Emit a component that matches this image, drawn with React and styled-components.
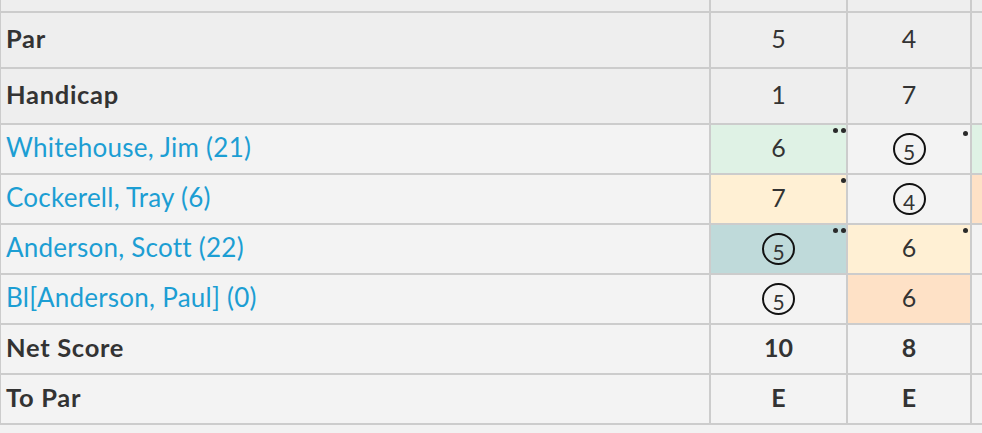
import React from "react";
import styled, { createGlobalStyle } from "styled-components";

const Global = createGlobalStyle`
  html, body { margin: 0; padding: 0; background: #f2f2f2; }
  body { font-family: Lato, "Open Sans", Arial, sans-serif; overflow: hidden; }
`;

const Table = styled.div`
  display: grid;
  grid-template-columns: 708px 135px 122px 122px;
  grid-template-rows: 11px 54px 54px repeat(6, 48px);
  column-gap: 2px;
  row-gap: 2px;
  padding: 0 0 2px 1px;
  background: #cccccc;
  width: 1200px;
  overflow: hidden;
`;

const tones = {
  head: "#eeeeee",
  plain: "#f3f3f3",
  green: "#dff2e5",
  yellow: "#fff0d4",
  peach: "#fee1c6",
  teal: "#bfdada",
};

const LabelCell = styled.div`
  display: flex;
  align-items: center;
  padding: 0 0 4px 5px;
  background: ${(p) => tones[p.$tone || "plain"]};
  color: ${(p) => (p.$link ? "#1c9ed3" : "#333333")};
  font-weight: ${(p) => (p.$bold ? 700 : 400)};
  font-size: ${(p) => (p.$bold ? "25.5px" : "26px")};
  letter-spacing: ${(p) => (p.$bold ? "0.7px" : "0.25px")};
  white-space: nowrap;
`;

const ScoreCell = styled.div`
  position: relative;
  display: flex;
  align-items: center;
  justify-content: center;
  padding-bottom: 4px;
  background: ${(p) => tones[p.$tone || "plain"]};
  color: #333333;
  font-weight: ${(p) => (p.$bold ? 700 : 400)};
  font-size: 25px;
`;

const Circle = styled.span`
  box-sizing: border-box;
  width: 33px;
  height: 32px;
  margin-top: 4px;
  border: 2px solid #111;
  border-radius: 50%;
  display: flex;
  justify-content: center;
  align-items: flex-start;
  padding-top: 7px;
  font-size: 21px;
  line-height: 20px;
  color: #333;
`;

const Dots = styled.span`
  position: absolute;
  top: ${(p) => (p.$low ? 6 : 3)}px;
  right: ${(p) => (p.$inset ? 2 : 0)}px;
  display: flex;
  gap: 3px;
`;

const Dot = styled.span`
  width: 5px;
  height: 5px;
  border-radius: 50%;
  background: #2a2a2a;
`;

const rows = [
  { label: "Par", tone: "head", bold: true, cells: [{ v: "5" }, { v: "4" }, {}] },
  { label: "Handicap", tone: "head", bold: true, cells: [{ v: "1" }, { v: "7" }, {}] },
  {
    label: "Whitehouse, Jim (21)",
    link: true,
    cells: [
      { v: "6", tone: "green", dots: 2 },
      { v: "5", circle: true, dots: 1, low: true, inset: true },
      { tone: "green" },
    ],
  },
  {
    label: "Cockerell, Tray (6)",
    link: true,
    cells: [
      { v: "7", tone: "yellow", dots: 1 },
      { v: "4", circle: true },
      { tone: "peach" },
    ],
  },
  {
    label: "Anderson, Scott (22)",
    link: true,
    cells: [
      { v: "5", circle: true, tone: "teal", dots: 2 },
      { v: "6", tone: "yellow", dots: 1, inset: true },
      {},
    ],
  },
  {
    label: "Bl[Anderson, Paul] (0)",
    link: true,
    cells: [{ v: "5", circle: true }, { v: "6", tone: "peach" }, {}],
  },
  { label: "Net Score", bold: true, cells: [{ v: "10", bold: true }, { v: "8", bold: true }, {}] },
  { label: "To Par", bold: true, cells: [{ v: "E", bold: true }, { v: "E", bold: true }, {}] },
];

export default function App() {
  return (
    <>
      <Global />
      <Table>
        <LabelCell $tone="head" />
        <ScoreCell $tone="head" />
        <ScoreCell $tone="head" />
        <ScoreCell $tone="head" />
        {rows.map((r) => (
          <React.Fragment key={r.label}>
            <LabelCell $tone={r.tone} $bold={r.bold} $link={r.link}>
              {r.label}
            </LabelCell>
            {r.cells.map((c, i) => (
              <ScoreCell key={i} $tone={c.tone || r.tone} $bold={c.bold}>
                {c.circle ? <Circle>{c.v}</Circle> : c.v}
                {c.dots ? (
                  <Dots $low={c.low} $inset={c.inset}>
                    {Array.from({ length: c.dots }).map((_, k) => (
                      <Dot key={k} />
                    ))}
                  </Dots>
                ) : null}
              </ScoreCell>
            ))}
          </React.Fragment>
        ))}
      </Table>
    </>
  );
}
